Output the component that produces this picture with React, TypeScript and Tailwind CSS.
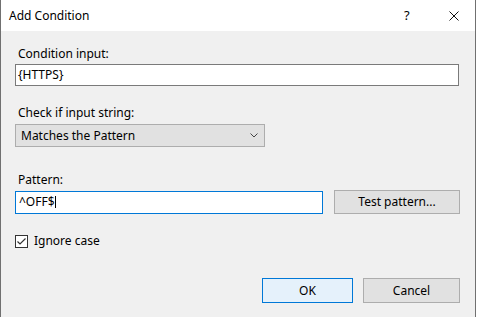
import React from "react";

const font = { fontFamily: '"Noto Sans", "Open Sans", sans-serif' };

const Label: React.FC<{ text: string; className?: string }> = ({ text, className }) => (
    <div className={`pl-[3px] text-[12px] leading-[16px] text-black ${className ?? ""}`}>{text}</div>
);

const App: React.FC = () => {
    return (
        <div className="w-[477px] h-[317px] bg-white flex overflow-hidden" style={font}>
            <div className="w-[476px] h-full flex flex-col border-x border-[#707070]">
                {/* title bar */}
                <div className="h-[31px] bg-white flex items-center pl-[8px] shrink-0">
                    <span className="text-[12px] text-black flex-1">Add Condition</span>
                    <span className="text-[13px] text-black w-[8px] mr-[37px] leading-none">?</span>
                    <svg width="10" height="10" viewBox="0 0 10 10" className="mr-[16px]">
                        <path d="M0.5 0.5 L9.5 9.5 M9.5 0.5 L0.5 9.5" stroke="#111" strokeWidth="1" />
                    </svg>
                </div>

                {/* body */}
                <div className="flex-1 bg-[#f0f0f0] flex flex-col pl-[14px] pr-[15px] pt-[15px]">
                    <Label text="Condition input:" />
                    <div className="mt-[2px] h-[22px] w-[444px] bg-white border border-[#7a7a7a] flex items-center pl-[2px] text-[12px] text-black">
                        {"{HTTPS}"}
                    </div>

                    <Label text="Check if input string:" className="mt-[19px]" />
                    <div className="mt-[3px] h-[23px] w-[250px] bg-[#e1e1e1] border border-[#adadad] flex items-center pl-[5px] pr-[6px] text-[12px] text-black">
                        <span className="flex-1">Matches the Pattern</span>
                        <svg width="8" height="5" viewBox="0 0 8 5">
                            <path d="M0.5 0.5 L4 4 L7.5 0.5" stroke="#444" strokeWidth="1" fill="none" />
                        </svg>
                    </div>

                    <Label text="Pattern:" className="mt-[25px]" />
                    <div className="mt-[2px] flex items-center">
                        <div className="h-[23px] w-[308px] bg-white border border-[#0078d7] flex items-center pl-[3px] text-[12px] text-black">
                            <span>^OFF$</span>
                            <span className="w-px h-[12px] bg-black" />
                        </div>
                        <button className="ml-[11px] h-[24px] w-[126px] bg-[#e1e1e1] border border-[#adadad] text-[12px] text-black">
                            Test pattern...
                        </button>
                    </div>

                    <div className="mt-[19px] flex items-center">
                        <div className="w-[13px] h-[13px] border border-[#333] bg-white flex items-center justify-center">
                            <svg width="11" height="11" viewBox="0 0 11 11">
                                <path d="M1.5 5.5 L4 8 L9.5 2.5" stroke="#333" strokeWidth="1.2" fill="none" />
                            </svg>
                        </div>
                        <span className="ml-[6px] text-[12px] leading-[16px] text-black">Ignore case</span>
                    </div>

                    <div className="mt-auto mb-[14px] flex justify-end">
                        <button className="h-[25px] w-[91px] bg-[#e5f1fb] border border-[#0078d7] text-[12px] text-black">
                            OK
                        </button>
                        <button className="ml-[10px] h-[25px] w-[97px] bg-[#e1e1e1] border border-[#adadad] text-[12px] text-black">
                            Cancel
                        </button>
                    </div>
                </div>
            </div>
        </div>
    );
};

export default App;
